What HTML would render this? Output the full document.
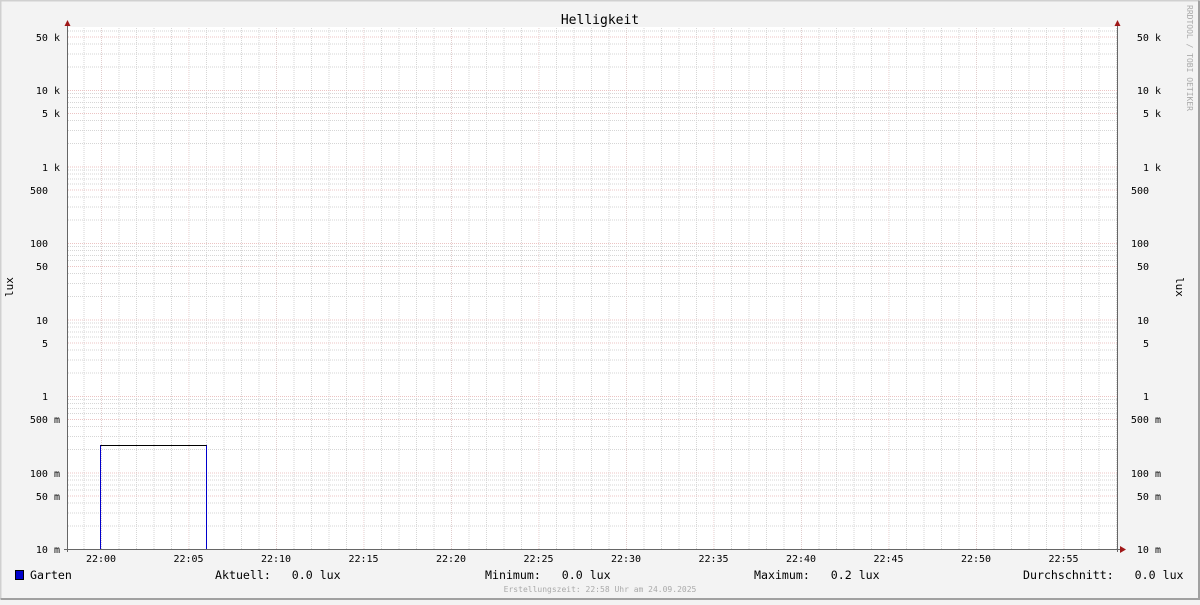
<!DOCTYPE html>
<html><head><meta charset="utf-8"><style>
html,body{margin:0;padding:0}
body{width:1200px;height:600px;overflow:hidden;background:#f3f3f3}
svg text{font-family:"DejaVu Sans Mono","Liberation Mono",monospace;fill:#000;white-space:pre}
</style></head><body>
<svg width="1200" height="600" viewBox="0 0 1200 600" xmlns="http://www.w3.org/2000/svg" xml:space="preserve">
<defs>
<pattern id="hp" patternUnits="userSpaceOnUse" x="0" y="13.5" width="1200" height="76.5">
<g stroke-dasharray="1,1" stroke-width="1">
<line x1="0" x2="1200" y1="0.5" y2="0.5" stroke="#ecc4c4"/>
<line x1="0" x2="1200" y1="23.5" y2="23.5" stroke="#ecc4c4"/>
<g stroke="#d6d6d6">
<line x1="0" x2="1200" y1="53.5" y2="53.5"/>
<line x1="0" x2="1200" y1="40.5" y2="40.5"/>
<line x1="0" x2="1200" y1="30.5" y2="30.5"/>
<line x1="0" x2="1200" y1="17.5" y2="17.5"/>
<line x1="0" x2="1200" y1="12.5" y2="12.5"/>
<line x1="0" x2="1200" y1="7.5" y2="7.5"/>
<line x1="0" x2="1200" y1="3.5" y2="3.5"/>
</g></g>
</pattern>
<pattern id="vp" patternUnits="userSpaceOnUse" x="66" y="0" width="17.5" height="600">
<line x1="0.5" x2="0.5" y1="0" y2="600" stroke="#d6d6d6" stroke-dasharray="1,1"/>
</pattern>
<pattern id="vm" patternUnits="userSpaceOnUse" x="101" y="0" width="87.5" height="600">
<line x1="0" x2="0" y1="0" y2="600" stroke="#ecc4c4" stroke-dasharray="1,1"/>
</pattern>
</defs>
<rect x="0" y="0" width="1200" height="600" fill="#f3f3f3"/>
<path d="M0.5 599V0.5H1199" stroke="#d0d0d0" stroke-width="2" fill="none"/>
<path d="M1199 0.5V599H0.5" stroke="#a0a0a0" stroke-width="2" fill="none"/>
<rect x="67" y="27" width="1050" height="522" fill="#fff"/>
<rect x="67" y="27" width="1050" height="522" fill="url(#vp)"/>
<rect x="67" y="27" width="1050" height="522" fill="url(#vm)"/>
<rect x="67" y="27" width="1050" height="522" fill="url(#hp)"/>
<path d="M67 549.5H100.5V445.5H206.5V549.5H1117" stroke="#0000cc" stroke-width="1" fill="none"/>
<path d="M100.5 445.5H206.5" stroke="#000" stroke-width="1"/>
<line x1="67.5" y1="24" x2="67.5" y2="552" stroke="#666"/>
<line x1="1117.5" y1="24" x2="1117.5" y2="552" stroke="#666"/>
<line x1="64" y1="549.5" x2="1121" y2="549.5" stroke="#666"/>
<path d="M64.5 26L67.5 20L70.5 26Z" fill="#a01818"/>
<path d="M1114.5 26L1117.5 20L1120.5 26Z" fill="#a01818"/>
<path d="M1120 546L1126 549.5L1120 553Z" fill="#a01818"/>
<text x="600" y="24" font-size="13" text-anchor="middle">Helligkeit</text>
<g font-size="10" text-anchor="end">
<text x="60" y="41">50 k</text><text x="60" y="94">10 k</text><text x="60" y="117">5 k</text>
<text x="60" y="171">1 k</text><text x="48" y="194">500</text><text x="48" y="247">100</text>
<text x="48" y="270">50</text><text x="48" y="324">10</text><text x="48" y="347">5</text>
<text x="48" y="400">1</text><text x="60" y="423">500 m</text><text x="60" y="477">100 m</text>
<text x="60" y="500">50 m</text><text x="60" y="553">10 m</text>
</g>
<g font-size="10" text-anchor="end">
<text x="1161" y="41">50 k</text><text x="1161" y="94">10 k</text><text x="1161" y="117">5 k</text>
<text x="1161" y="171">1 k</text><text x="1149" y="194">500</text><text x="1149" y="247">100</text>
<text x="1149" y="270">50</text><text x="1149" y="324">10</text><text x="1149" y="347">5</text>
<text x="1149" y="400">1</text><text x="1161" y="423">500 m</text><text x="1161" y="477">100 m</text>
<text x="1161" y="500">50 m</text><text x="1161" y="553">10 m</text>
</g>
<g font-size="10" text-anchor="middle">
<text x="101" y="562">22:00</text><text x="188.5" y="562">22:05</text><text x="276" y="562">22:10</text>
<text x="363.5" y="562">22:15</text><text x="451" y="562">22:20</text><text x="538.5" y="562">22:25</text>
<text x="626" y="562">22:30</text><text x="713.5" y="562">22:35</text><text x="801" y="562">22:40</text>
<text x="888.5" y="562">22:45</text><text x="976" y="562">22:50</text><text x="1063.5" y="562">22:55</text>
</g>
<text font-size="11" transform="translate(13,287) rotate(-90)" text-anchor="middle">lux</text>
<text font-size="11" transform="translate(1176,287) rotate(90)" text-anchor="middle">lux</text>
<text font-size="8" style="fill:#aaa" transform="translate(1187,5) rotate(90)">RRDTOOL / TOBI OETIKER</text>
<rect x="15.5" y="570.5" width="8" height="9" fill="#0000cc" stroke="#000"/>
<g font-size="11.6">
<text x="30" y="579">Garten</text>
<text x="215" y="579">Aktuell:   0.0 lux</text>
<text x="485" y="579">Minimum:   0.0 lux</text>
<text x="754" y="579">Maximum:   0.2 lux</text>
<text x="1023" y="579">Durchschnitt:   0.0 lux</text>
</g>
<text x="600" y="592" font-size="8" text-anchor="middle" style="fill:#aaa">Erstellungszeit: 22:58 Uhr am 24.09.2025</text>
</svg>
</body></html>
